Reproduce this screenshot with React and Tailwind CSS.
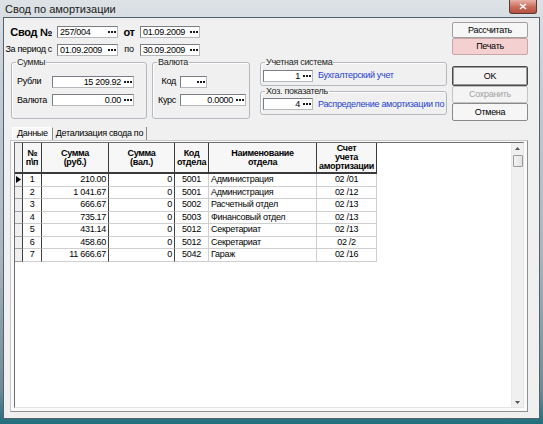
import React from 'react';

const font = "font-['Liberation_Sans_Narrow','Liberation_Sans',Arial,sans-serif]";

const rows = [
  ['1', '210.00', '0', '5001', 'Администрация', '02 /01'],
  ['2', '1 041.67', '0', '5001', 'Администрация', '02 /12'],
  ['3', '666.67', '0', '5002', 'Расчетный отдел', '02 /13'],
  ['4', '735.17', '0', '5003', 'Финансовый отдел', '02 /13'],
  ['5', '431.14', '0', '5012', 'Секретариат', '02 /13'],
  ['6', '458.60', '0', '5012', 'Секретариат', '02 /2'],
  ['7', '11 666.67', '0', '5042', 'Гараж', '02 /16'],
];

const cols = 'grid grid-cols-[8px_19px_67px_66px_34px_108px_60px] w-[362px]';

function Dots() {
  return (
    <span className="flex h-full w-[10px] shrink-0 items-center justify-center gap-[1px]">
      <i className="block h-[2px] w-[2px] bg-[#1a1a1a]" />
      <i className="block h-[2px] w-[2px] bg-[#1a1a1a]" />
      <i className="block h-[2px] w-[2px] bg-[#1a1a1a]" />
    </span>
  );
}

function Field({ value, right, className = '' }) {
  return (
    <div className={`flex h-[12px] items-center border border-[#b5b8bd] border-l-[#7a7d84] border-t-[#7a7d84] bg-white ${className}`}>
      <span className={`flex-1 overflow-hidden whitespace-nowrap px-[2px] leading-[10px] ${right ? 'text-right' : ''}`}>{value}</span>
      <Dots />
    </div>
  );
}

function GroupBox({ title, className = '', children }) {
  return (
    <fieldset className={`min-w-0 rounded-[3px] border border-[#b3b9bf] shadow-[inset_1px_1px_0_#fff] ${className}`}>
      <legend className="ml-[4px] whitespace-nowrap px-[1px] leading-[11px] text-[#222]">{title}</legend>
      {children}
    </fieldset>
  );
}

function Btn({ children, className = '' }) {
  return (
    <button className={`flex w-full items-center justify-center rounded-[2px] border leading-[11px] ${className}`}>
      {children}
    </button>
  );
}

function Grid() {
  return (
    <div className="flex h-full border border-[#e3e3e3] border-l-[#6d6d6d] border-t-[#6d6d6d] bg-white">
      <div className="flex-1">
        {/* header */}
        <div className={`${cols} h-[31px] font-bold leading-[9px]`}>
          <div className="border-b-2 border-r border-[#3a3a3a] bg-[#f0f0f0]" />
          {['№\nп\\п', 'Сумма\n(руб.)', 'Сумма\n(вал.)', 'Код\nотдела', 'Наименование\nотдела', 'Счет\nучета\nамортизации'].map((h) => (
            <div key={h} className="flex items-center justify-center whitespace-pre-line border-b-2 border-r border-[#3a3a3a] bg-[#f7f7f7] text-center">
              {h}
            </div>
          ))}
        </div>
        {rows.map((r, i) => (
          <div key={r[0]} className={`${cols} h-[12.5px] leading-[11px]`}>
            <div className="flex items-center border-b border-r border-b-[#a0a0a0] border-r-[#404040] bg-[#f0f0f0] pl-[1px]">
              {i === 0 && (
                <svg width="5" height="7" viewBox="0 0 5 7">
                  <path d="M0 0 L5 3.5 L0 7 Z" fill="#000" />
                </svg>
              )}
            </div>
            <div className="border-b border-r border-b-[#cfcfcf] border-r-[#404040] text-center">{r[0]}</div>
            <div className="border-b border-r border-b-[#cfcfcf] border-r-[#404040] pr-[2px] text-right">{r[1]}</div>
            <div className="border-b border-r border-b-[#cfcfcf] border-r-[#404040] pr-[2px] text-right">{r[2]}</div>
            <div className="border-b border-r border-[#cfcfcf] text-center">{r[3]}</div>
            <div className="overflow-hidden whitespace-nowrap border-b border-r border-[#cfcfcf] pl-[2px]">{r[4]}</div>
            <div className="border-b border-r border-[#cfcfcf] text-center">{r[5]}</div>
          </div>
        ))}
      </div>
      {/* scrollbar */}
      <div className="flex w-[12px] flex-col items-center border-l border-[#e8e8e8] bg-[#f0f0f0]">
        <svg className="mt-[4px]" width="5" height="3" viewBox="0 0 5 3">
          <path d="M0 3 L2.5 0 L5 3 Z" fill="#555" />
        </svg>
        <div className="mt-[5px] h-[12px] w-[10px] rounded-[1px] border border-[#9a9a9a] bg-[linear-gradient(to_right,#f4f4f4,#e2e2e2)]" />
        <div className="flex-1" />
        <svg className="mb-[3px]" width="5" height="3" viewBox="0 0 5 3">
          <path d="M0 0 L2.5 3 L5 0 Z" fill="#555" />
        </svg>
      </div>
    </div>
  );
}

export default function App() {
  return (
    <div className={`${font} flex h-[424px] w-[543px] flex-col bg-[linear-gradient(to_bottom,#dde2e6_0%,#c3ccd3_20%,#a9b5bd_60%,#6f8a95_92%,#1f6f7e_100%)] text-[9px] tracking-[-0.3px] text-black`}>
      {/* title bar */}
      <div className="flex h-[18px] shrink-0 items-start">
        <span className="pl-[5px] pt-[3px] text-[11px] leading-[12px] tracking-normal text-[#1a1a1a]">Свод по амортизации</span>
        <div className="ml-auto mr-[6px] flex h-[14px] w-[28px] items-center justify-center rounded-b-[3px] border border-t-0 border-[#5a3a36] bg-[linear-gradient(to_bottom,#e7b3a6,#c96a58_55%,#b5503f)]">
          <svg width="8" height="7" viewBox="0 0 8 7">
            <path d="M1 1 L7 6 M7 1 L1 6" stroke="#fff" strokeWidth="1.6" />
          </svg>
        </div>
      </div>

      {/* client area */}
      <div className="mx-[4px] mb-[6px] flex flex-1 flex-col bg-[#f0f0f0] shadow-[0_0_0_1px_#55626b]">
        <div className="flex items-start">
          {/* left */}
          <div className="w-[448px]">
            <div className="mt-[8px] flex h-[12px] items-center">
              <div className="flex w-[53px] justify-end whitespace-nowrap pr-[5px] text-[11px] font-bold">Свод №</div>
              <Field value="257/004" className="w-[61px]" />
              <div className="w-[22px] text-center text-[11px] font-bold">от</div>
              <Field value="01.09.2009" className="w-[60px]" />
            </div>
            <div className="mt-[6px] flex h-[12px] items-center">
              <div className="flex w-[53px] justify-end whitespace-nowrap pr-[5px]">За период с</div>
              <Field value="01.09.2009" className="w-[61px]" />
              <div className="w-[22px] text-center">по</div>
              <Field value="30.09.2009" className="w-[60px]" />
            </div>

            <div className="mt-[1px] flex items-start">
              <GroupBox title="Суммы" className="ml-[7px] w-[136px] pb-[11px] pt-[7px]">
                <div className="flex flex-col gap-[5px]">
                  <div className="flex items-center">
                    <span className="w-[40px] pl-[5px]">Рубли</span>
                    <Field value="15 209.92" right className="w-[82px]" />
                  </div>
                  <div className="flex items-center">
                    <span className="w-[40px] pl-[5px]">Валюта</span>
                    <Field value="0.00" right className="w-[82px]" />
                  </div>
                </div>
              </GroupBox>

              <GroupBox title="Валюта" className="ml-[5px] w-[98px] pb-[11px] pt-[7px]">
                <div className="flex flex-col gap-[5px]">
                  <div className="flex items-center">
                    <span className="w-[27px] pr-[4px] text-right">Код</span>
                    <Field value="" className="w-[27px]" />
                  </div>
                  <div className="flex items-center">
                    <span className="w-[27px] pr-[4px] text-right">Курс</span>
                    <Field value="0.0000" right className="w-[66px]" />
                  </div>
                </div>
              </GroupBox>

              <div className="ml-[10px] flex w-[187px] flex-col">
                <GroupBox title="Учетная система" className="pb-[2px] pt-[1px]">
                  <div className="flex items-center pl-[2px]">
                    <Field value="1" right className="w-[50px] shrink-0" />
                    <span className="ml-[5px] overflow-hidden whitespace-nowrap text-[#1f3fd0]">Бухгалтерский учет</span>
                  </div>
                </GroupBox>
                <GroupBox title="Хоз. показатель" className="pb-[3px] pt-[1px]">
                  <div className="flex items-center overflow-hidden pl-[2px]">
                    <Field value="4" right className="w-[50px] shrink-0" />
                    <span className="ml-[5px] overflow-hidden whitespace-nowrap text-[#1f3fd0]">Распределение амортизации по отделам</span>
                  </div>
                </GroupBox>
              </div>
            </div>
          </div>

          {/* right buttons */}
          <div className="mt-[4px] flex w-[76px] flex-col">
            <Btn className="h-[16px] border-[#a0a0a0] bg-[#f6f6f6]">Рассчитать</Btn>
            <Btn className="h-[17px] border-[#c9a5a5] bg-[#f4d0d0]">Печать</Btn>
            <Btn className="mt-[11px] h-[20px] border-[#4a4a4a] bg-[#f3f3f3] shadow-[inset_0_0_0_1px_#9a9a9a]">OK</Btn>
            <Btn className="h-[17px] border-[#c4c4c4] bg-[#f4f4f4] text-[#a3a3a3]">Сохранить</Btn>
            <Btn className="h-[18px] border-[#8a8a8a] bg-[#f6f6f6]">Отмена</Btn>
          </div>
        </div>

        {/* tabs */}
        <div className="mt-[6px] flex h-[13px] items-stretch pl-[8px]">
          <div className="flex items-center border-l border-r border-t border-l-white border-r-[#8a8a8a] border-t-white bg-[#f8f8f8] px-[4px]">Данные</div>
          <div className="flex items-center border-r border-[#8a8a8a] px-[3px]">Детализация свода по</div>
        </div>

        {/* panel */}
        <div className="ml-[6px] h-[272px] w-[518px] border border-[#8e8f8f] border-l-[#c8c8c8] border-t-[#c8c8c8] bg-[#fafafa] px-[3px] pb-[3px] pt-[1px]">
          <Grid />
        </div>
      </div>
    </div>
  );
}
